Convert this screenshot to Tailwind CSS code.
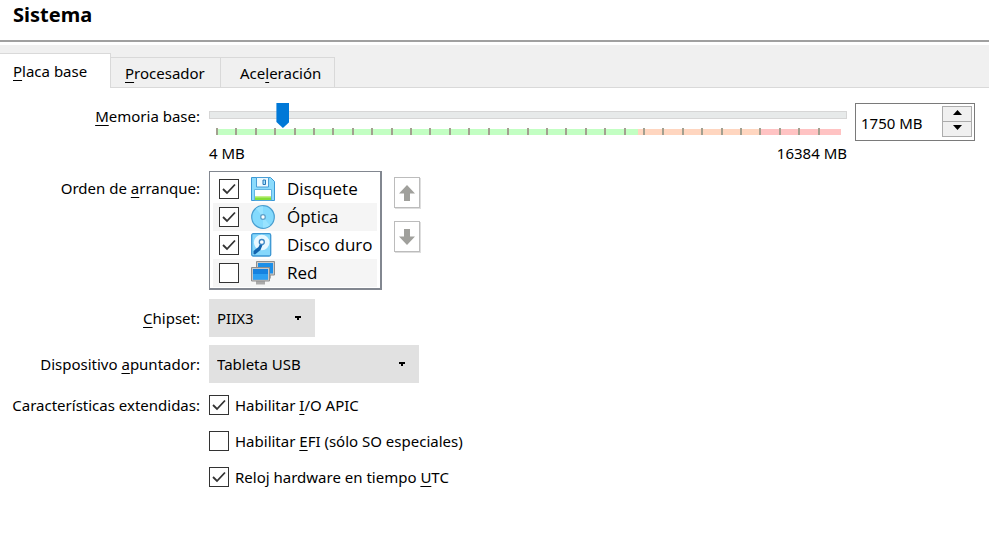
<!DOCTYPE html>
<html lang="es">
<head>
<meta charset="utf-8">
<meta name="viewport" content="width=device-width, initial-scale=1">
<title>Sistema</title>
<script src="https://cdn.jsdelivr.net/npm/@tailwindcss/browser@4"></script>
</head>
<body class="bg-white text-black text-[15px] leading-5 font-['Noto_Sans',sans-serif] [&_u]:decoration-1 [&_u]:underline-offset-3">
<header class="h-[42px] border-b-2 border-[#a0a0a0] pl-[13px] pt-[3px]">
  <h1 class="text-xl leading-6 font-bold">Sistema</h1>
</header>

<div role="tablist" class="mt-[3px] flex h-[43px] items-end bg-[#f0f0f0] shadow-[inset_0_-1px_0_#d9d9d9]">
  <button role="tab" aria-selected="true" class="h-[35px] w-[111px] border-t border-r border-[#d9d9d9] bg-white pl-[13px] text-left"><u>P</u>laca base</button>
  <button role="tab" aria-selected="false" class="h-[31px] w-[110px] border-y border-r border-[#d9d9d9] bg-[#f0f0f0] pl-[14px] text-left"><u>P</u>rocesador</button>
  <button role="tab" aria-selected="false" class="h-[31px] w-[114px] border-y border-r border-[#d9d9d9] bg-[#f0f0f0] pl-[19px] text-left">Ace<u>l</u>eración</button>
</div>

<main role="tabpanel" class="grid grid-cols-[200px_1fr] gap-x-[9px] pt-[15px] pr-[14px]">
  <label for="mem" class="pt-[3px] text-right"><u>M</u>emoria base:</label>
  <div class="flex items-start gap-2">
    <div class="flex-1">
      <input id="mem" type="range" min="4" max="16384" value="1750" class="block h-6 w-full appearance-none bg-transparent [&::-webkit-slider-runnable-track]:h-2 [&::-webkit-slider-runnable-track]:border [&::-webkit-slider-runnable-track]:border-[#d6d6d6] [&::-webkit-slider-runnable-track]:bg-[#e7eaea] [&::-webkit-slider-thumb]:-mt-[9px] [&::-webkit-slider-thumb]:h-[25px] [&::-webkit-slider-thumb]:w-[13px] [&::-webkit-slider-thumb]:appearance-none [&::-webkit-slider-thumb]:bg-[#0078d7] [&::-webkit-slider-thumb]:[clip-path:polygon(0_0,100%_0,100%_76%,50%_100%,0_76%)]">
      <div class="mt-px mr-[6px] ml-[7px] flex h-[7px] bg-[linear-gradient(0deg,transparent_6px,#fff_6px),linear-gradient(90deg,#c3ffc3_67.5%,#ffd6c0_67.5%,#ffd6c0_86.8%,#ffc3c3_86.8%)] pr-1 *:flex-1 *:border-l-2 *:border-[#a3a090]">
        <i></i><i></i><i></i><i></i><i></i><i></i><i></i><i></i><i></i><i></i><i></i><i></i><i></i><i></i><i></i><i></i><i></i><i></i><i></i><i></i><i></i><i></i><i></i><i></i><i></i><i></i><i></i><i></i><i></i><i></i><i></i><i></i>
      </div>
      <div class="mt-2 flex justify-between"><span>4 MB</span><span>16384 MB</span></div>
    </div>
    <div class="flex h-[38px] w-[120px] border border-[#7a7a7a] p-[2px]">
      <input type="text" value="1750 MB" aria-label="Memoria base" class="min-w-0 flex-1 pt-[2px] pl-[3px] outline-none">
      <div class="flex h-[31px] w-[30px] flex-col border border-[#acacac] bg-[#f0f0f0]">
        <button aria-label="Aumentar" class="flex flex-1 items-center justify-center border-b border-[#acacac] pb-[2px]"><svg class="h-[5px] w-[9px]" viewBox="0 0 9 5"><path d="M0 5L4.500 0L9 5z"/></svg></button>
        <button aria-label="Disminuir" class="flex flex-1 items-center justify-center pb-[3px]"><svg class="h-[5px] w-[9px]" viewBox="0 0 9 5"><path d="M0 0h9L4.500 5z"/></svg></button>
      </div>
    </div>
  </div>

  <div id="boot" class="mt-2 pt-[7px] text-right">Orden de <u>a</u>rranque:</div>
  <div class="mt-2 flex items-start gap-3">
    <ul aria-labelledby="boot" class="w-[173px] border border-r-2 border-b-2 border-[#828790] p-[3px] pb-px text-[17px] leading-7 whitespace-nowrap font-['Open_Sans',sans-serif] *:flex *:h-7 *:items-center *:pl-[6px] *:even:bg-[#f5f5f5]">
      <li>
        <input id="b1" type="checkbox" checked class="peer size-5 appearance-none border border-[#333] bg-white">
        <svg class="pointer-events-none -ml-5 size-5 shrink-0 opacity-0 peer-checked:opacity-100" viewBox="0 0 20 20" fill="none" stroke="#333" stroke-width="1.800"><path d="M4 10l4 4 8-8.500"/></svg>
        <svg class="ml-3 size-6" viewBox="0 0 24 24"><path d="M.5.5h19l4 4v19H.5z" fill="#8bdbfc" stroke="#3c98d4"/><path d="M5.500.5h12V10h-12z" fill="#eefaff" stroke="#4a9ed6"/><path d="M12 3h2.500v4.500H12z" fill="#a8e1ff" stroke="#2879b8"/><path d="M3.500 12.500h17V23h-17z" fill="#fff" stroke="#62b5e4"/><path d="M4 19.500h16V23H4z" fill="#84de36"/><path d="M4 19h16v1.500H4z" fill="#c4f08c"/></svg>
        <label for="b1" class="ml-3">Disquete</label>
      </li>
      <li>
        <input id="b2" type="checkbox" checked class="peer size-5 appearance-none border border-[#333] bg-white">
        <svg class="pointer-events-none -ml-5 size-5 shrink-0 opacity-0 peer-checked:opacity-100" viewBox="0 0 20 20" fill="none" stroke="#333" stroke-width="1.800"><path d="M4 10l4 4 8-8.500"/></svg>
        <svg class="ml-3 size-6" viewBox="0 0 24 24"><circle cx="12" cy="12" r="11.300" fill="#84dafd" stroke="#4a9fd0" stroke-width="1.200"/><path d="M12 12L5 3.500a11 11 0 0 1 7-2.200zM12 12l7 8.500a11 11 0 0 1-7 2.200z" fill="#98e3ff"/><circle cx="12" cy="12" r="2.300" fill="#fff" stroke="#5fa0c8" stroke-width="1.300"/></svg>
        <label for="b2" class="ml-3">Óptica</label>
      </li>
      <li>
        <input id="b3" type="checkbox" checked class="peer size-5 appearance-none border border-[#333] bg-white">
        <svg class="pointer-events-none -ml-5 size-5 shrink-0 opacity-0 peer-checked:opacity-100" viewBox="0 0 20 20" fill="none" stroke="#333" stroke-width="1.800"><path d="M4 10l4 4 8-8.500"/></svg>
        <svg class="ml-3 size-6" viewBox="0 0 24 24"><rect x=".7" y=".7" width="19" height="22.300" rx="1.500" fill="#86d8fc" stroke="#3d97d3" stroke-width="1.300"/><circle cx="10.700" cy="9.500" r="7.800" fill="#e8f8ff"/><path d="M12.500 9.500L9.500 17 4 21.500l-1.500-.5V18l5-4 2-4z" fill="#1264ae"/><circle cx="10.800" cy="9" r="2.500" fill="#fff" stroke="#3d87c4" stroke-width="1.300"/></svg>
        <label for="b3" class="ml-3">Disco duro</label>
      </li>
      <li>
        <input id="b4" type="checkbox" class="peer size-5 appearance-none border border-[#333] bg-white">
        <svg class="pointer-events-none -ml-5 size-5 shrink-0 opacity-0 peer-checked:opacity-100" viewBox="0 0 20 20" fill="none" stroke="#333" stroke-width="1.800"><path d="M4 10l4 4 8-8.500"/></svg>
        <svg class="ml-3 size-6" viewBox="0 0 24 24"><path d="M12 14h8v3.500h-8z" fill="#aaa"/><path d="M5.500.5h18v13.500h-18z" fill="#c9c9c9" stroke="#8e8e8e"/><path d="M7 2h15v10.500H7z" fill="#1c8fe8"/><path d="M5 20h9v3.500H5z" fill="#aaa"/><path d="M.5 6.500h18V20H.5z" fill="#c9c9c9" stroke="#8e8e8e"/><path d="M2 8h15v10.500H2z" fill="#1582e0"/><path d="M2 13h15v5.500H2z" fill="#2da0f2"/></svg>
        <label for="b4" class="ml-3">Red</label>
      </li>
    </ul>
    <div class="mt-[6px] flex flex-col gap-[13px]">
      <button aria-label="Subir" class="flex h-[31px] w-[26px] items-center justify-center border border-[#bcbcbc] shadow-[1px_1px_0_#dedede]"><svg class="size-4" viewBox="0 0 16 16" fill="#a0a09c"><path d="M8 0l8 8.500h-5V16H5V8.500H0z"/></svg></button>
      <button aria-label="Bajar" class="flex h-[31px] w-[26px] items-center justify-center border border-[#bcbcbc] shadow-[1px_1px_0_#dedede]"><svg class="size-4" viewBox="0 0 16 16" fill="#a0a09c"><path d="M8 16l8-8.500h-5V0H5v7.500H0z"/></svg></button>
    </div>
  </div>

  <label for="chip" class="mt-2 self-center text-right"><u>C</u>hipset:</label>
  <div class="mt-[9px] flex items-center">
    <select id="chip" class="h-[38px] w-[106px] appearance-none bg-[#e1e1e1] pl-2"><option>PIIX3</option></select>
    <svg class="pointer-events-none -ml-5 h-[4px] w-[6px]" viewBox="0 0 6 4"><path d="M0 0h6v2H4v2H2V2H0z"/></svg>
  </div>

  <label for="point" class="mt-2 self-center text-right">Dispositivo <u>a</u>puntador:</label>
  <div class="mt-2 flex items-center">
    <select id="point" class="h-[38px] w-[210px] appearance-none bg-[#e1e1e1] pl-2"><option>Tableta USB</option></select>
    <svg class="pointer-events-none -ml-5 h-[4px] w-[6px]" viewBox="0 0 6 4"><path d="M0 0h6v2H4v2H2V2H0z"/></svg>
  </div>

  <div id="ext" class="mt-3 text-right">Características extendidas:</div>
  <div role="group" aria-labelledby="ext" class="mt-3 flex flex-col gap-4 *:flex *:items-center">
    <div>
      <input id="c1" type="checkbox" checked class="peer size-5 appearance-none border border-[#333]">
      <svg class="pointer-events-none -ml-5 size-5 opacity-0 peer-checked:opacity-100" viewBox="0 0 20 20" fill="none" stroke="#333" stroke-width="1.800"><path d="M4 10l4 4 8-8.500"/></svg>
      <label for="c1" class="ml-[6px]">Habilitar <u>I</u>/O APIC</label>
    </div>
    <div>
      <input id="c2" type="checkbox" class="peer size-5 appearance-none border border-[#333]">
      <svg class="pointer-events-none -ml-5 size-5 opacity-0 peer-checked:opacity-100" viewBox="0 0 20 20" fill="none" stroke="#333" stroke-width="1.800"><path d="M4 10l4 4 8-8.500"/></svg>
      <label for="c2" class="ml-[6px]">Habilitar <u>E</u>FI (sólo SO especiales)</label>
    </div>
    <div>
      <input id="c3" type="checkbox" checked class="peer size-5 appearance-none border border-[#333]">
      <svg class="pointer-events-none -ml-5 size-5 opacity-0 peer-checked:opacity-100" viewBox="0 0 20 20" fill="none" stroke="#333" stroke-width="1.800"><path d="M4 10l4 4 8-8.500"/></svg>
      <label for="c3" class="ml-[6px]">Reloj hardware en tiempo <u>U</u>TC</label>
    </div>
  </div>
</main>
</body>
</html>
